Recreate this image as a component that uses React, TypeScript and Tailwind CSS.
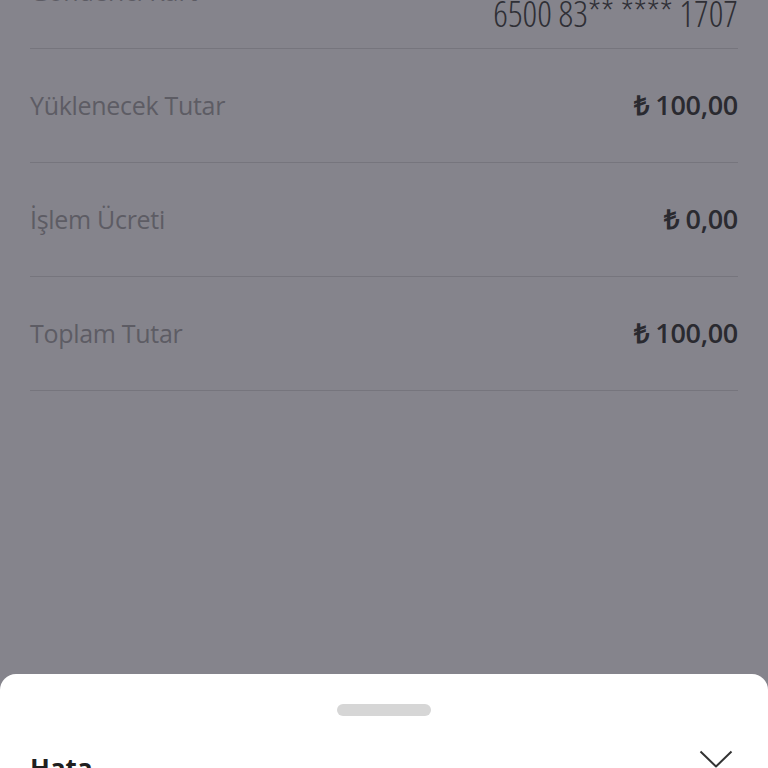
const ROWS = [
  { label: "Yüklenecek Tutar", value: "₺ 100,00" },
  { label: "İşlem Ücreti", value: "₺ 0,00" },
  { label: "Toplam Tutar", value: "₺ 100,00" },
];

export default function App() {
  return (
    <div
      className="relative h-[768px] w-[768px] overflow-hidden bg-[#85848c]"
      style={{ fontFamily: '"Open Sans", "Liberation Sans", sans-serif' }}
    >
      <div className="px-[30px]">
        {/* Sender card row, partly scrolled off */}
        <div className="-mt-[24px] flex h-[73px] flex-col border-b border-[#76757d]">
          <span className="text-[25px] leading-[30px] text-[#5d5c64]">Gönderici Kart</span>
          <span className="-mt-[12px] self-end text-[36px] font-light leading-[40px] text-[#2f2f35] font-stretch-[82%]">
            6500 83** **** 1707
          </span>
        </div>

        {ROWS.map((r) => (
          <div key={r.label} className="flex h-[114px] items-center justify-between border-b border-[#76757d]">
            <span className="text-[25px] tracking-[-0.3px] text-[#5d5c64]">{r.label}</span>
            <span className="text-[27px] font-semibold tracking-[-0.3px] text-[#2a2a30]">{r.value}</span>
          </div>
        ))}
      </div>

      {/* Bottom sheet */}
      <div className="absolute inset-x-0 top-[674px] h-[120px] rounded-t-2xl bg-white px-[30px]">
        <div className="flex justify-center pt-[30px]">
          <div className="h-[12px] w-[94px] rounded-full bg-[#d6d6d6]" />
        </div>
        <div className="mt-[36px] flex items-start justify-between">
          <span className="mt-[3px] text-[26px] font-bold leading-none text-[#1f1f1f]">Hata</span>
          <svg width="34" height="18" viewBox="0 0 34 18" fill="none" className="-mt-[2px] mr-[5px]">
            <polyline points="1.5,1.5 17,16.5 32.5,1.5" stroke="#333" strokeWidth="2" strokeLinejoin="round" />
          </svg>
        </div>
      </div>
    </div>
  );
}
